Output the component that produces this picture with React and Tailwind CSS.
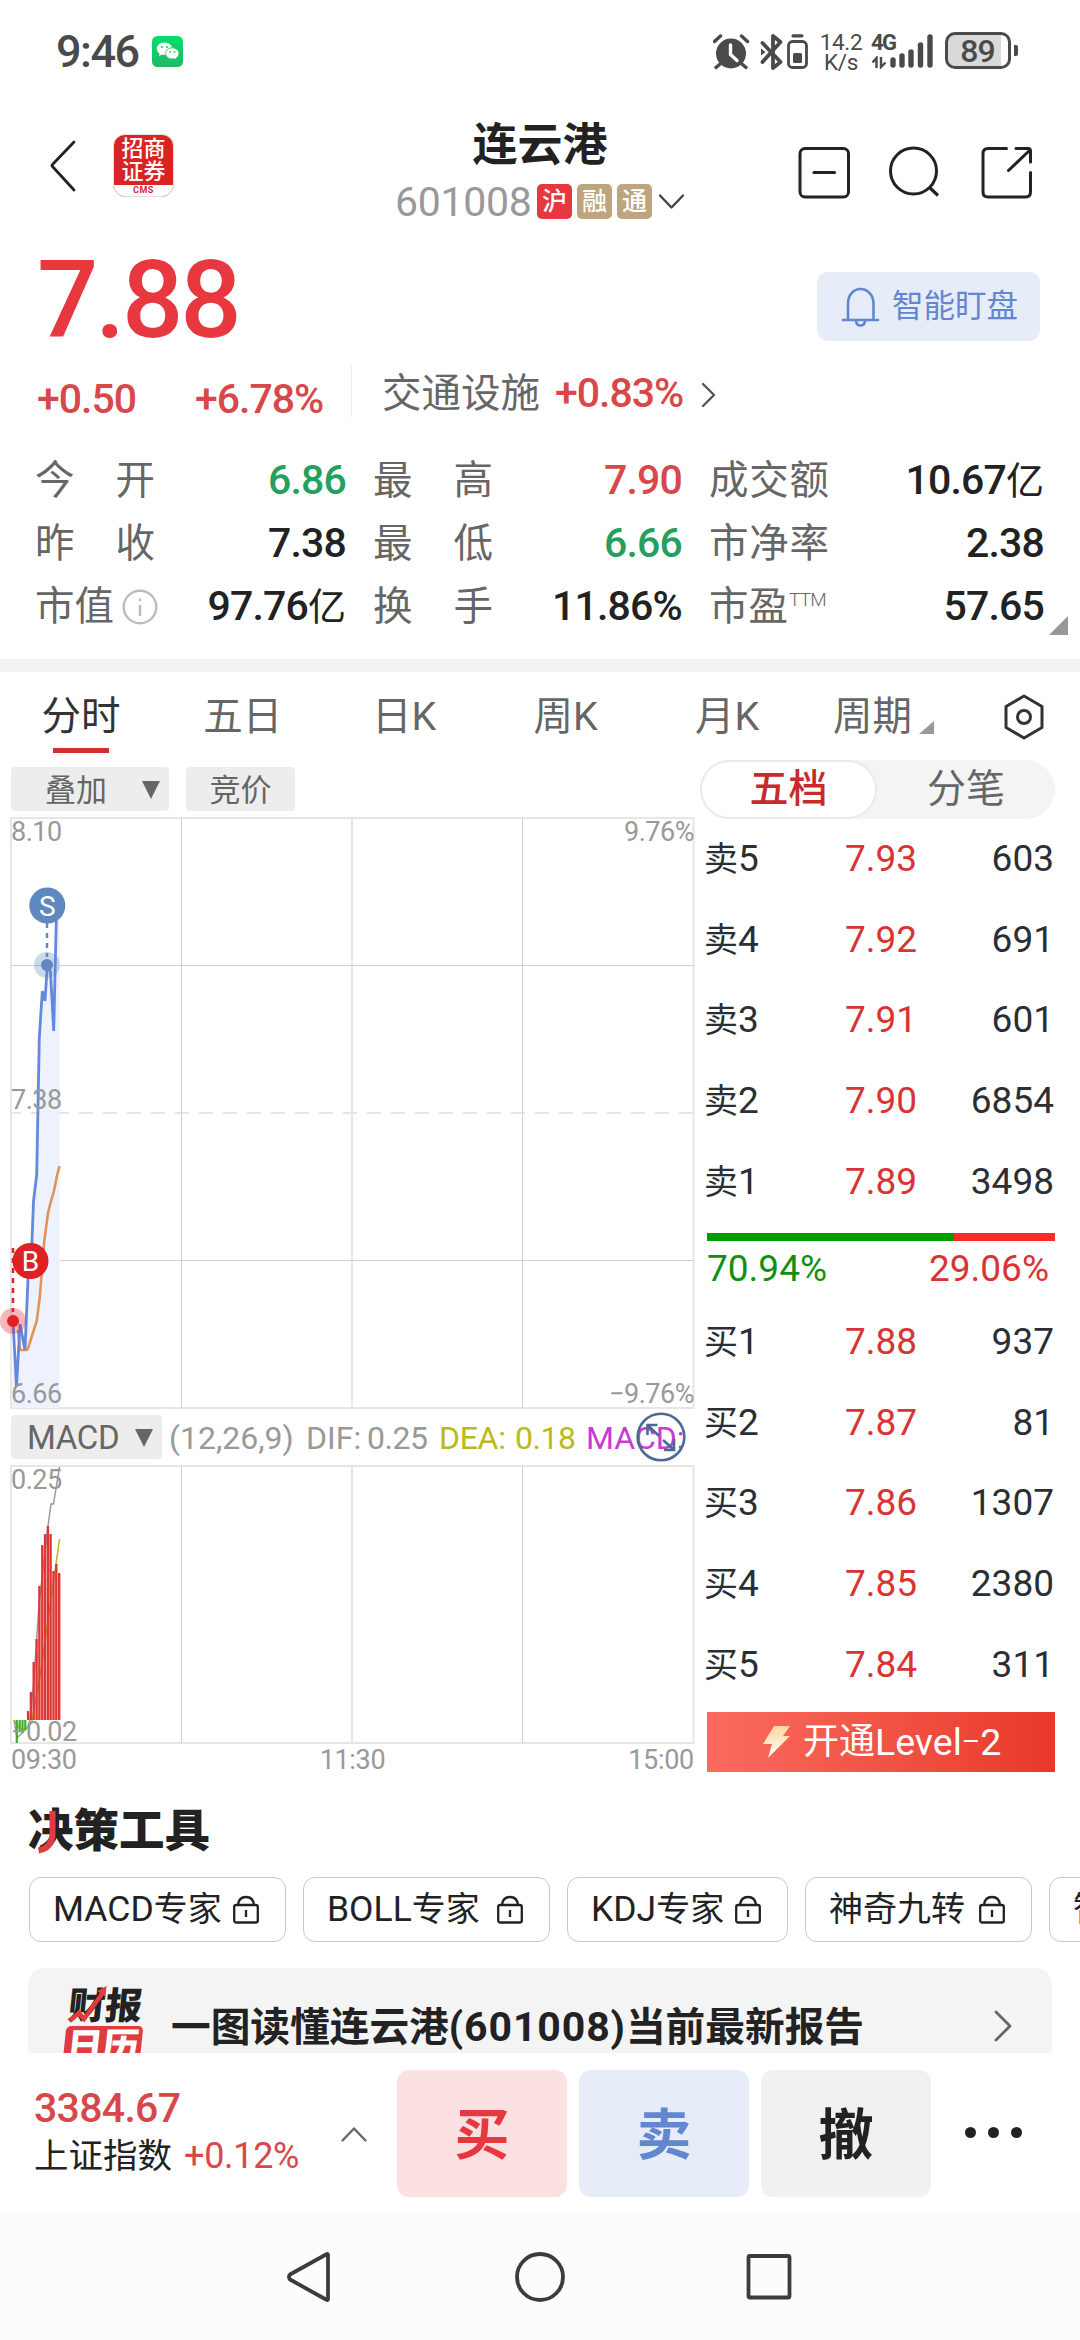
import React from "react";

const stats = [
  [["今", "开", "6.86", "text-[#259f60]"], ["最", "高", "7.90", "text-[#d8474a]"], ["成", "交", "10.67", "text-[#222]", "额", "亿"]],
  [["昨", "收", "7.38", "text-[#222]"], ["最", "低", "6.66", "text-[#259f60]"], ["市", "净", "2.38", "text-[#222]", "率"]],
  [["市", "值", "97.76", "text-[#222]", "info", "亿"], ["换", "手", "11.86", "text-[#222]", "", "%"], ["市", "盈", "57.65", "text-[#222]", "ttm"]],
];

const asks = [["卖5", "7.93", "603"], ["卖4", "7.92", "691"], ["卖3", "7.91", "601"], ["卖2", "7.90", "6854"], ["卖1", "7.89", "3498"]];
const bids = [["买1", "7.88", "937"], ["买2", "7.87", "81"], ["买3", "7.86", "1307"], ["买4", "7.85", "2380"], ["买5", "7.84", "311"]];

const macdBars = [
  [28.1, 1711], [30.9, 1692], [33.7, 1662], [36.6, 1639], [39.4, 1586], [42.3, 1545],
  [45.1, 1534], [47.9, 1526], [50.6, 1534], [53.5, 1571], [56.3, 1564], [59.2, 1573],
];

function StatusBar() {
  return (
    <div className="flex h-[104px] items-start pt-[32px] text-[#4a4a4a]">
      <div className="ml-[56px] flex h-[40px] w-[96px] items-center text-[45px] font-medium tracking-[-1.5px]">9:46</div>
      <svg className="mt-[4px]" width="32" height="32" viewBox="0 0 32 32">
        <defs>
          <linearGradient id="wx" x1="0" y1="0" x2="0" y2="1"><stop offset="0" stopColor="#04de6b" /><stop offset="1" stopColor="#22b866" /></linearGradient>
        </defs>
        <rect width="31" height="31" rx="5.5" fill="url(#wx)" />
        <path d="M12.5 6.5C8 6.500 4.800 9.300 4.800 12.800c0 2 1.100 3.700 2.800 4.900L7 20l2.800-1.500c.9.200 1.800.4 2.700.4 4.300 0 7.700-2.800 7.700-6.200S16.800 6.500 12.500 6.500z" fill="#fff" />
        <path d="M20.300 11.800c-3.800 0-6.700 2.500-6.700 5.600s2.900 5.600 6.700 5.600c.8 0 1.500-.1 2.200-.3l2.300 1.300-.5-2c1.700-1 2.700-2.700 2.700-4.600 0-3.100-2.900-5.600-6.700-5.600z" fill="#fff" stroke="#10c968" strokeWidth=".9" />
        <g fill="#12c868"><circle cx="9.800" cy="11" r="1" /><circle cx="15" cy="11" r="1" /><circle cx="18" cy="15.800" r=".9" /><circle cx="22.500" cy="15.800" r=".9" /></g>
      </svg>
      <svg className="ml-[529px]" width="98" height="40" viewBox="712 32 98 40" fill="none" stroke="#4a4a4a">
        <circle cx="730" cy="53.500" r="15" fill="#4a4a4a" stroke="none" />
        <path d="M713.500 41.500l6-5.500M746.500 41.500l-6-5.500M718.500 64.500l-3.500 3M741.500 64.500l3.500 3" strokeWidth="3.400" strokeLinecap="round" />
        <path d="M729.500 45v9.500l6.500 6" stroke="#fff" strokeWidth="3.400" strokeLinecap="round" strokeLinejoin="round" />
        <path d="M761.500 43l18 19-7.500 6V36l7.500 6-18 20" strokeWidth="3.800" strokeLinejoin="round" strokeLinecap="round" />
        <path d="M760 48.500l4.500 3.500-4.500 3.500z" fill="#4a4a4a" stroke="none" />
        <rect x="787.500" y="41.500" width="18" height="26" rx="4" strokeWidth="2.800" />
        <rect x="792" y="53" width="9" height="10" rx="1.500" fill="#4a4a4a" stroke="none" />
        <path d="M792 35.800h9" strokeWidth="3.200" strokeLinecap="round" />
      </svg>
      <div className="ml-[8px] w-[44px] text-center text-[22.500px] leading-[20px] tracking-[-0.3px]">
        <div>14.2</div>
        <div>K/s</div>
      </div>
      <div className="ml-[8px] w-[18px]">
        <div className="mt-[1px] h-[19px] text-[22px] font-bold leading-[20px] tracking-[-1.500px]">4G</div>
        <svg className="mt-[4px]" width="16" height="13" viewBox="0 0 16 13" fill="none" stroke="#4a4a4a" strokeWidth="2.400">
          <path d="M5.500 12V2L1.500 6.500M10 1v10l4.500-4.500" />
        </svg>
      </div>
      <svg className="ml-[0px]" width="46" height="37" viewBox="889 32 46 37" stroke="#4a4a4a" strokeWidth="5.400" strokeLinecap="round">
        <path d="M893 60v5M902 56v9M911 52v13M920.500 45v20M930 37v28" />
      </svg>
      <div className="ml-[10px] flex items-center">
        <div className="flex h-[37px] w-[66px] items-center justify-center rounded-[10px] border-[3px] border-[#4a4a4a] bg-[linear-gradient(to_right,#d9d9d9_88%,#fff_88%)] text-[32px] font-medium tracking-[-1px]">
          <span className="-ml-[1px]">89</span>
        </div>
        <div className="ml-[3px] h-[11px] w-[4px] rounded-r-[2px] bg-[#4a4a4a]" />
      </div>
    </div>
  );
}

function Header() {
  return (
    <div className="grid h-[136px] grid-cols-[390px_300px_390px] items-start">
      <div className="flex">
        <svg className="ml-[48px] mt-[35px]" width="32" height="54" viewBox="0 0 32 54" fill="none" stroke="#222" strokeWidth="2.800" strokeLinecap="round" strokeLinejoin="round">
          <path d="M26 3L4.500 25.500q-1 1 0 2L26 51" />
        </svg>
        <div className="ml-[33px] mt-[30px] flex h-[63px] w-[61px] flex-col overflow-hidden rounded-[12px] border border-[#e5dede] bg-[#da2323] text-white">
          <div className="flex h-[51px] flex-col items-center pt-[2px] text-[22px] font-medium leading-[23px]">
            <div>招商</div>
            <div>证券</div>
          </div>
          <div className="flex h-[11px] items-center justify-center bg-white text-[9px] font-bold leading-none tracking-[0.5px] text-[#d42a2a]">CMS</div>
        </div>
      </div>
      <div className="flex flex-col items-center">
        <div className="mt-[14px] flex h-[54px] items-center text-[45px] font-bold leading-none text-[#222]">连云港</div>
        <div className="mt-[12px] flex h-[35px] items-center">
          <span className="mt-[1px] w-[142px] text-[41px] leading-none tracking-[-0.3px] text-[#999]">601008</span>
          <span className="flex h-[35px] w-[35px] items-center justify-center rounded-[5px] bg-[#e6383e] text-[25px] font-medium leading-none text-white">沪</span>
          <span className="ml-[5px] flex h-[35px] w-[35px] items-center justify-center rounded-[5px] bg-[#bda580] text-[25px] font-medium leading-none text-white">融</span>
          <span className="ml-[5px] flex h-[35px] w-[35px] items-center justify-center rounded-[5px] bg-[#bda580] text-[25px] font-medium leading-none text-white">通</span>
          <svg className="ml-[6px]" width="27" height="18" viewBox="0 0 27 18" fill="none" stroke="#444" strokeWidth="2.400" strokeLinecap="round" strokeLinejoin="round"><path d="M2 2.500l11.500 12L25 2.500" /></svg>
        </div>
      </div>
      <svg className="ml-[101px] mt-[38px]" width="250" height="60" viewBox="790 142 250 60" fill="none" stroke="#222" strokeWidth="3" strokeLinecap="round" strokeLinejoin="round">
        <rect x="799" y="148.500" width="48.500" height="48.500" rx="5" />
        <path d="M813 172.500h20.500" strokeWidth="3.200" />
        <circle cx="912.500" cy="171" r="23" />
        <path d="M928.500 187.500l8.500 8" strokeWidth="3.200" strokeLinecap="butt" />
        <path d="M1005.500 148.500h-18.500q-5 0-5 5V192q0 5 5 5h37.500q5 0 5-5v-19.500M1015 148.500h12q2.500 0 2.500 2.500v11M1007.500 170.500l21.500-20.500" />
      </svg>
    </div>
  );
}

function Price() {
  return (
    <div className="h-[419px]">
      <div className="flex h-[116px] items-start justify-between pl-[37px] pr-[40px]">
        <div className="mt-[15px] flex h-[90px] items-center text-[108px] font-medium leading-none tracking-[-3.2px] text-[#e6383e]">7.88</div>
        <div className="mt-[32px] flex h-[69px] w-[223px] items-center rounded-[11px] bg-[#e7edf8] pl-[24px] text-[31.500px] leading-none text-[#6286cf]">
          <svg className="mr-[12px]" width="39" height="42" viewBox="0 0 39 42" fill="none" stroke="#6286cf" strokeWidth="2.600" strokeLinecap="round">
            <path d="M2 34h35M7 34V17.500C7 9 12.500 3 19.500 3S32.500 9 32.500 17.500V34M15 35q.5 4.500 4.500 4.500t4.500-4.500" />
          </svg>
          智能盯盘
        </div>
      </div>
      <div className="flex h-[93px] items-start text-[41px] font-medium leading-none tracking-[-1px] text-[#d8474a]">
        <div className="ml-[37px] mt-[23px] w-[158px]">+0.50</div>
        <div className="mt-[23px] w-[156px]">+6.78%</div>
        <div className="mt-[10px] h-[51px] w-[1px] bg-[#ececec]" />
        <div className="ml-[30px] mt-[18px] w-[173px] text-[39.500px] font-normal tracking-normal text-[#666]">交通设施</div>
        <div className="mt-[17px]">+0.83%</div>
        <svg className="ml-[18px] mt-[26px]" width="16" height="26" viewBox="0 0 16 26" fill="none" stroke="#555" strokeWidth="2.400" strokeLinecap="round" strokeLinejoin="round"><path d="M2 2l11 11L2 24" /></svg>
      </div>
      <div className="relative">
        {stats.map((row, i) => (
          <div key={i} className="flex h-[63px] items-center">
            {row.map(([a, b, v, color, extra, unit], j) => (
              <div key={j} className={"flex items-center " + ["ml-[35px] w-[311px]", "ml-[27px] w-[309px]", "ml-[27px] w-[335px]"][j]}>
                <div className="flex w-[120px] items-center justify-between whitespace-nowrap text-[39.500px] leading-none text-[#666]">
                  {extra === "info" || extra === "ttm" ? <span>{a + b}</span> : <span>{a}</span>}
                  {extra !== "info" && extra !== "ttm" && <span>{b}</span>}
                  {extra === "额" || extra === "率" ? <span>{extra}</span> : null}
                  {extra === "info" && (
                    <svg className="-mr-[3px] shrink-0" width="36" height="36" viewBox="0 0 36 36" fill="none" stroke="#bbb" strokeWidth="2.400">
                      <circle cx="18" cy="18" r="16.300" /><path d="M18 16v11" /><circle cx="18" cy="11" r="1" fill="#bbb" stroke="none" /><path d="M18 9.500v2.600" />
                    </svg>
                  )}
                  {extra === "ttm" && <span className="mb-[14px] ml-[1px] w-[40px] text-[19px] font-light tracking-[-0.800px]">TTM</span>}
                </div>
                <div className={"flex flex-1 items-center justify-end whitespace-nowrap text-[41px] font-medium leading-none tracking-[-0.800px] " + color}>
                  {v}
                  {unit === "亿" ? <span className="text-[38px] font-normal tracking-normal">{unit}</span> : unit}
                </div>
              </div>
            ))}
          </div>
        ))}
        <div className="absolute bottom-[3px] right-[12px] border-b-[19px] border-l-[19px] border-b-[#999] border-l-transparent" />
      </div>
    </div>
  );
}

function PeriodTabs() {
  return (
    <div className="flex h-[94px] items-start pt-[23px] text-[39.500px] leading-none text-[#666]">
      <div className="flex w-[162px] flex-col items-center text-[#333]">
        <div className="flex h-[44px] items-center">分时</div>
        <div className="mt-[9px] h-[5px] w-[56px] bg-[#cc3030]" />
      </div>
      {["五日", "日K", "周K", "月K"].map((t) => (
        <div key={t} className="flex h-[44px] w-[161.500px] items-center justify-center">{t}</div>
      ))}
      <div className="ml-[25px] flex h-[44px] items-center">周期</div>
      <div className="ml-[7px] mt-[26px] border-b-[13px] border-l-[15px] border-b-[#999] border-l-transparent" />
      <svg className="ml-[67px] mt-[-2px]" width="46" height="48" viewBox="0 0 46 48" fill="none" stroke="#333" strokeWidth="3" strokeLinejoin="round">
        <path d="M23 3l18 10.500v21L23 45 5 34.500v-21z" /><circle cx="23" cy="24" r="6.500" />
      </svg>
    </div>
  );
}

function Triangle() {
  return <span className="border-x-[9.500px] border-t-[18px] border-x-transparent border-t-[#666]" />;
}

function Charts() {
  const label = "absolute text-[27px] leading-[20px] tracking-[-0.500px] text-[#999]";
  return (
    <div className="w-[700px]">
      <div className="ml-[11px] mt-px flex h-[44px] text-[31px] leading-none text-[#666]">
        <div className="flex w-[158px] items-center justify-between rounded-[4px] bg-[#ededed] pl-[34px] pr-[9px] pt-[2px]">叠加<Triangle /></div>
        <div className="ml-[17px] flex w-[109px] items-center justify-center rounded-[4px] bg-[#ededed] pt-[2px]">竞价</div>
      </div>
      <div className="relative mt-[5px] h-[594px]">
        <svg className="block" width="700" height="594" viewBox="0 816 700 594" fill="none">
          <g stroke="#e6e6e6" strokeWidth="2">
            <rect x="11" y="818" width="682.500" height="590" />
            <path d="M352 818v590" />
            <path d="M11 1113h683" strokeDasharray="14 10" strokeDashoffset="4" />
          </g>
          <path d="M181.500 818v590M522.500 818v590M11 965.500h683M11 1260.500h683" stroke="#cfcfcf" />
          <path d="M13 1321l3.500 66 3.500-63 5 26 3-71 4-38 1.500-40 3.200-26 2.600-137 3-47 2.700 10 2.300-36 3.200 7 3.200 59 2.600-111 1.700-6 1.500 0V1408H12z" fill="#edf2fe" />
          <path d="M18 1330l2 20h7l1.500-3 8.200-26 3-23 4.600-57 3.700-28 3-12 3-10 2.700-14 2.800-11" stroke="#e0935a" strokeWidth="2.600" />
          <path d="M13 1321l3.500 66 3.500-63 5 26 3-71 4-38 1.500-40 3.200-26 2.600-137 3-47 2.700 10 2.300-36 3.200 7 3.200 59 2.600-111 .5-10" stroke="#6488dc" strokeWidth="2.800" />
          <path d="M47 923v34" stroke="#5f88c0" strokeWidth="2.500" strokeDasharray="5 5" />
          <circle cx="47" cy="965" r="13" fill="#5f88c0" fillOpacity=".32" />
          <circle cx="47" cy="965" r="6" fill="#5f88c0" />
          <circle cx="47.300" cy="905.500" r="18" fill="#5f88c0" />
          <path d="M13 1248v64" stroke="#d9262a" strokeWidth="2.500" strokeDasharray="5 5" />
          <circle cx="13" cy="1321" r="13" fill="#df2025" fillOpacity=".32" />
          <circle cx="13" cy="1321" r="6" fill="#df2025" />
          <circle cx="30.500" cy="1261" r="18" fill="#df2025" />
          <text x="47.300" y="915.500" fontSize="28" fill="#fff" textAnchor="middle">S</text>
          <text x="30.500" y="1271" fontSize="28" fill="#fff" textAnchor="middle">B</text>
        </svg>
        <span className={label + " left-[11px] top-[6px]"}>8.10</span>
        <span className={label + " left-[11px] top-[274px]"}>7.38</span>
        <span className={label + " left-[11px] top-[568px]"}>6.66</span>
        <span className={label + " right-[6px] top-[6px]"}>9.76%</span>
        <span className={label + " right-[6px] top-[568px]"}>−9.76%</span>
      </div>
      <div className="relative ml-[11px] mt-[5px] flex h-[44px] items-center text-[32px] leading-none text-[#999]">
        <div className="flex h-[44px] w-[151px] items-center justify-between rounded-[4px] bg-[#ededed] pl-[16px] pr-[9px] pt-[1px] text-[33px] tracking-[-0.300px] text-[#666]">MACD<Triangle /></div>
        <span className="ml-[7px] mt-[1px] w-[137px]">(12,26,9)</span>
        <span className="mt-[1px] w-[61px]">DIF:</span>
        <span className="mt-[1px] w-[72px] tracking-[-0.500px]">0.25</span>
        <span className="mt-[1px] w-[76px] tracking-[-0.300px] text-[#bbb91c]">DEA:</span>
        <span className="mt-[1px] w-[71px] tracking-[-0.500px] text-[#bbb91c]">0.18</span>
        <span className="mt-[1px] text-[#c73ad4]">MACD:</span>
        <svg className="absolute left-[625px] top-[-3px]" width="50" height="50" viewBox="0 0 50 50" fill="none" stroke="#4a6a92" strokeWidth="2.600">
          <circle cx="25" cy="25" r="23.300" />
          <path d="M11.500 23V13h10M12 13.500l11 10.500M38 27v11H28M37.500 37.500L27 28" />
        </svg>
      </div>
      <div className="relative mt-[5px] h-[281px]">
        <svg className="block" width="700" height="281" viewBox="0 1464 700 281" fill="none">
          <g stroke="#e6e6e6" strokeWidth="2"><rect x="11" y="1466" width="682.500" height="277" /><path d="M352 1466v277" /></g>
          <path d="M181.500 1466v277M522.500 1466v277" stroke="#cfcfcf" />
          <path d="M14 1720l3 18 6-6 4-4 3-8 4-40 5-76 9-78 3-22h2.500l6-37" stroke="#999" strokeWidth="1.500" />
          <path d="M14 1720l6 9h6l6-8 9-50 8-58 6-42 4.500-32" stroke="#bbb91c" strokeWidth="1.500" />
          {macdBars.map(([x, y]) => <path key={x} d={`M${x} ${y}V1720`} stroke="#dd3733" strokeWidth="2.400" />)}
          <path d="M16.800 1720v23M19.700 1720v11M22.500 1720v13M25.300 1720v10" stroke="#43ab2c" strokeWidth="2.200" />
        </svg>
        <span className={label + " left-[11px] top-[6px]"}>0.25</span>
        <span className={label + " left-[11px] top-[258px]"}>−0.02</span>
      </div>
      <div className="ml-[11px] mt-[5px] flex w-[683px] justify-between text-[27px] leading-[20px] tracking-[-0.300px] text-[#999]">
        <span>09:30</span><span>11:30</span><span>15:00</span>
      </div>
    </div>
  );
}

function Row({ row }) {
  return (
    <div className="flex h-[80.800px] items-center text-[37px] leading-none text-[#2b2e33]">
      <span className="w-[141px]"><span className="text-[34px]">{row[0][0]}</span>{row[0][1]}</span>
      <span className="w-[90px] text-[#d93434]">{row[1]}</span>
      <span className="w-[119px] text-right">{row[2]}</span>
    </div>
  );
}

function OrderBook() {
  return (
    <div className="w-[380px]">
      <div className="-mt-[6px] flex h-[59px] w-[355px] rounded-full bg-[#f4f4f4] text-[39px] leading-none text-[#666]">
        <div className="flex w-[177px] items-center justify-center rounded-full border-2 border-[#eaeaea] bg-white font-medium text-[#c62b2b]">五档</div>
        <div className="flex flex-1 items-center justify-center">分笔</div>
      </div>
      <div className="ml-[4px] -mt-[1px]">{asks.map((r) => <Row key={r[0]} row={r} />)}</div>
      <div className="ml-[7px] mt-[11px] flex h-[8px] w-[348px]">
        <div className="w-[247px] bg-[#009f00]" />
        <div className="flex-1 bg-[#fb2b2b]" />
      </div>
      <div className="ml-[7px] mt-[9px] flex h-[38px] w-[342px] items-center justify-between text-[37px] leading-none">
        <span className="text-[#128f12]">70.94%</span>
        <span className="text-[#d93434]">29.06%</span>
      </div>
      <div className="ml-[4px] mt-[13px]">{bids.map((r) => <Row key={r[0]} row={r} />)}</div>
      <div className="ml-[7px] mt-[7px] flex h-[60px] w-[348px] items-center bg-gradient-to-r from-[#fa6b5e] to-[#e83828] pl-[56px] text-[36px] leading-none text-white">
        <svg className="mr-[13px]" width="27" height="32" viewBox="0 0 27 32">
          <defs><linearGradient id="bolt" x1="0" y1="0" x2="0" y2="1"><stop offset="0" stopColor="#ffd79a" /><stop offset="1" stopColor="#fff" /></linearGradient></defs>
          <path d="M11 0h16l-7 10h7L5 32l4-14H0z" fill="url(#bolt)" />
        </svg>
        开通<span className="mt-[1px] text-[37.500px]">Level</span><span className="mt-[1px] text-[28px]">–</span><span className="mt-[1px] text-[37.500px]">2</span>
      </div>
    </div>
  );
}

function Lock() {
  return (
    <svg className="shrink-0" width="26" height="29" viewBox="0 0 26 29" fill="none" stroke="#222" strokeWidth="2.300">
      <rect x="1.200" y="10" width="23.600" height="17.500" rx="2" /><path d="M5 10C5.500 4.500 8.500 2 13 2s7.500 2.500 8 8M13 15v7" />
    </svg>
  );
}

function Tools() {
  return (
    <div className="h-[265px] overflow-hidden">
      <div className="relative ml-[28px] mt-[20px] flex h-[48px] items-center text-[45.500px] font-black leading-none text-[#222]">
        决策工具
        <svg className="absolute left-0 top-0" width="46" height="48" viewBox="0 0 46 48" fill="none" stroke="#e03c40" strokeWidth="6">
          <path d="M24.500 3v24q-1 13-14 15.500" />
        </svg>
      </div>
      <div className="ml-[29px] mt-[21px] flex gap-[17px] text-[34px] leading-none text-[#222]">
        {[["MACD", "专家", "w-[257px]"], ["BOLL", "专家", "w-[247px]"], ["KDJ", "专家", "w-[221px]"], ["", "神奇九转", "w-[227px]"], ["", "智能选股", "w-[227px]"]].map(([l, c, w]) => (
          <div key={l + c} className={"flex h-[65px] shrink-0 items-center justify-between rounded-[12px] border border-[#c8c8c8] pl-[23px] pr-[26px] " + w}>
            <span className="whitespace-nowrap"><span className="text-[35.500px]">{l}</span>{c}</span>
            <Lock />
          </div>
        ))}
      </div>
      <div className="ml-[28px] mt-[26px] flex h-[120px] w-[1024px] items-start rounded-t-[17px] bg-[#f4f4f4]">
        <div className="relative ml-[37px] mt-[21px] h-[100px] w-[80px] -skew-x-6">
          <div className="text-[37px] font-black leading-[36px] text-[#222]">财报</div>
          <div className="mt-px flex h-[45px] w-[77px] justify-center rounded-[5px] bg-[#e03c40] pt-[3px] text-[36px] font-black leading-[36px] text-white">日历</div>
          <svg className="absolute left-0 top-[-4px]" width="46" height="40" viewBox="0 0 46 40" fill="none" stroke="#e03c40" strokeWidth="4.500"><path d="M3 36l8-8 6 6L34 6" /><path d="M27 6l9-5v11z" fill="#e03c40" stroke="none" /></svg>
        </div>
        <div className="ml-[26px] mt-[39px] w-[800px] whitespace-nowrap text-[39.700px] font-bold leading-[40px] text-[#222]">
          一图读懂连云港<span className="text-[41px] tracking-[0.900px]">(601008)</span>当前最新报告
        </div>
        <svg className="ml-[22px] mt-[41px]" width="22" height="34" viewBox="0 0 22 34" fill="none" stroke="#666" strokeWidth="2.800" strokeLinecap="round" strokeLinejoin="round"><path d="M3 3l14 14L3 31" /></svg>
      </div>
    </div>
  );
}

function TradeBar() {
  const btn = "flex h-[127px] w-[170px] items-center justify-center rounded-[12px] pt-[3px] text-[55px] font-bold leading-none ";
  return (
    <div className="flex h-[161px] items-start bg-white pt-[17px]">
      <div className="ml-[34px] mt-[18px] w-[306px]">
        <div className="text-[41px] font-medium leading-[40px] tracking-[-0.700px] text-[#d8474a]">3384.67</div>
        <div className="mt-[7px] flex items-center text-[34.500px] leading-[42px] text-[#222]">上证指数<span className="ml-[12px] text-[36px] tracking-[-0.300px] text-[#d8474a]">+0.12%</span></div>
      </div>
      <svg className="mt-[55px]" width="28" height="18" viewBox="0 0 28 18" fill="none" stroke="#666" strokeWidth="2.400" strokeLinecap="round" strokeLinejoin="round"><path d="M2.500 15.500l11.500-12 11.500 12" /></svg>
      <div className="ml-[29px] flex gap-[12px]">
        <div className={btn + "bg-[#fce1e2] text-[#e6383e]"}>买</div>
        <div className={btn + "bg-[#e7edf8] text-[#6286cf]"}>卖</div>
        <div className={btn + "bg-[#f1f1f1] text-[#222]"}>撤</div>
      </div>
      <div className="ml-[34px] mt-[57px] flex gap-[12px]">
        {[0, 1, 2].map((i) => <div key={i} className="h-[11px] w-[11px] rounded-full bg-[#222]" />)}
      </div>
    </div>
  );
}

function SystemNav() {
  return (
    <div className="h-[126px] bg-[#fcfcfc]">
      <svg width="1080" height="126" viewBox="0 2214 1080 126" fill="none" stroke="#3c3c3c" strokeWidth="3.800" strokeLinejoin="round">
        <path d="M328 2255v44q0 2-2 0.500l-36-20q-2-2.500 0-5l36-20q2-1.500 2 .5z" />
        <circle cx="540" cy="2277" r="23" />
        <rect x="748.500" y="2256" width="41" height="41.500" rx="1.500" />
      </svg>
    </div>
  );
}

export default function App() {
  return (
    <div className="flex h-[2340px] w-[1080px] flex-col overflow-hidden bg-white font-['Roboto','Noto_Sans_CJK_SC',sans-serif]">
      <StatusBar />
      <Header />
      <Price />
      <div className="h-[13px] bg-[#f2f3f5]" />
      <PeriodTabs />
      <div className="flex h-[1022px] shrink-0 items-start">
        <Charts />
        <OrderBook />
      </div>
      <Tools />
      <TradeBar />
      <SystemNav />
    </div>
  );
}
